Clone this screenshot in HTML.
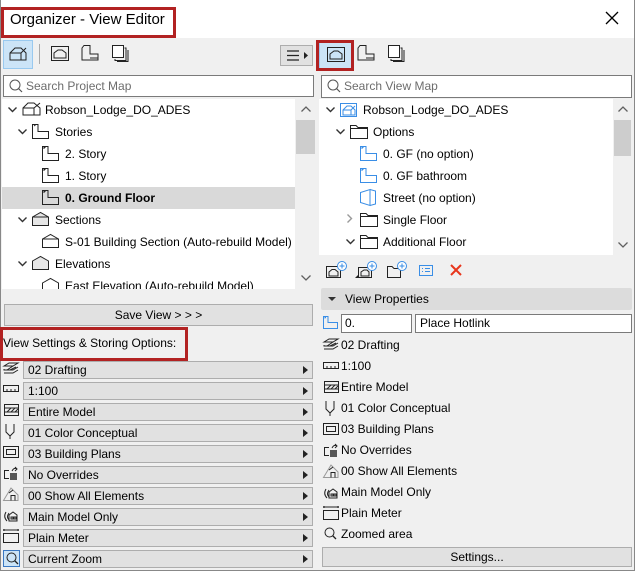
<!DOCTYPE html>
<html><head><style>
*{box-sizing:border-box;margin:0;padding:0}
body{width:635px;height:571px;overflow:hidden;background:#f0f0f0;font-family:"Liberation Sans",sans-serif;font-size:12px;color:#000;position:relative}
.a{position:absolute}
.t{position:absolute;white-space:nowrap;line-height:14px}
.dd{position:absolute;left:23px;width:290px;height:18px;background:#e1e1e1;border:1px solid #adadad;padding-left:4px;line-height:16px}
.dd:after{content:"";position:absolute;right:4px;top:4px;border-left:5px solid #222;border-top:4px solid transparent;border-bottom:4px solid transparent}
svg{position:absolute;overflow:visible}
</style></head><body>
<div class="a" style="left:0;top:0;width:635px;height:38px;background:#fff"></div>
<div class="a" style="left:0;top:0;width:1px;height:571px;background:#888"></div>
<div class="a" style="right:0;top:0;width:1px;height:571px;background:#888"></div>
<div class="a" style="left:0;bottom:0;width:635px;height:1px;background:#888"></div>
<div class="a" style="left:1px;top:7px;width:175px;height:31px;border:3px solid #b22222"></div>
<div class="t" style="left:10px;top:11px;font-size:15px;line-height:18px">Organizer - View Editor</div>
<svg style="left:606px;top:12px" width="12" height="12"><path d="M0 0L12 12M12 0L0 12" stroke="#000" stroke-width="1.3"/></svg>

<!-- left toolbar -->
<div class="a" style="left:3px;top:40px;width:30px;height:29px;background:#cce4f7;border:1px solid #99c9ef"></div>
<svg style="left:9px;top:47px" width="18" height="14"><path d="M1 13V6L6 1H12L17 6V13ZM1 6H12L17 1M12 6V13" fill="none" stroke="#222"/></svg>
<div class="a" style="left:39px;top:44px;width:1px;height:20px;background:#aaa"></div>
<svg style="left:51px;top:46px" width="18" height="16"><rect x="0.5" y="0.5" width="17" height="14" fill="none" stroke="#222"/><path d="M3 12V7L7 4H11L15 7V12Z" fill="none" stroke="#222"/></svg>
<svg style="left:81px;top:45px" width="18" height="17"><path d="M3 0.5H9V9H17V15H1V3Z M9 13H17" fill="none" stroke="#222"/></svg>
<svg style="left:112px;top:45px" width="17" height="17"><rect x="0.5" y="0.5" width="11" height="12" fill="#fff" stroke="#222"/><path d="M3 14V15.5H14V3H12.5M5 16.5H16V5" fill="none" stroke="#222"/></svg>
<div class="a" style="left:280px;top:45px;width:33px;height:21px;background:#e1e1e1;border:1px solid #adadad"></div>
<svg style="left:287px;top:50px" width="22" height="12"><path d="M0 1H12M0 5.5H12M0 10H12" stroke="#222" stroke-width="1.2"/><path d="M17 2L21 5.5L17 9Z" fill="#222"/></svg>

<!-- left search -->
<div class="a" style="left:3px;top:75px;width:311px;height:22px;background:#fff;border:1px solid #7a7a7a"></div>
<svg style="left:9px;top:79px" width="14" height="14"><circle cx="6" cy="6" r="5" fill="none" stroke="#555"/><path d="M9.5 9.5L13 13" stroke="#555" stroke-width="1.2"/></svg>
<div class="t" style="left:26px;top:79px;color:#6d6d6d">Search Project Map</div>

<!-- left tree -->
<div class="a" style="left:2px;top:99px;width:293px;height:190px;background:#fff"></div>
<div class="a" style="left:295px;top:99px;width:20px;height:190px;background:#f0f0f0"></div>
<div class="a" style="left:296px;top:120px;width:19px;height:34px;background:#cdcdcd"></div>
<svg style="left:301px;top:106px" width="10" height="6"><path d="M0.5 5.5L5 1L9.5 5.5" fill="none" stroke="#606060" stroke-width="1.3"/></svg>
<svg style="left:301px;top:275px" width="10" height="6"><path d="M0.5 0.5L5 5L9.5 0.5" fill="none" stroke="#606060" stroke-width="1.3"/></svg>
<div class="a" style="left:2px;top:187px;width:293px;height:22px;background:#d9d9d9"></div>
<svg style="left:8px;top:107px" width="10" height="6"><path d="M0.5 0.5L4.5 4.5L8.5 0.5" fill="none" stroke="#333" stroke-width="1.4"/></svg>
<svg style="left:22px;top:102px" width="20" height="14"><path d="M1 13V6L6 1H12L18 6V13ZM1 6H12L18 1M12 6V13" fill="none" stroke="#222"/></svg>
<div class="t" style="left:45px;top:103px">Robson_Lodge_DO_ADES</div>
<svg style="left:18px;top:129px" width="10" height="6"><path d="M0.5 0.5L4.5 4.5L8.5 0.5" fill="none" stroke="#333" stroke-width="1.4"/></svg>
<svg style="left:32px;top:124px" width="18" height="15"><path d="M0.5 0.5H6V7.5H16.5V14.5H0.5Z M2 2L3.5 1" fill="none" stroke="#222"/></svg>
<div class="t" style="left:55px;top:125px">Stories</div>
<svg style="left:42px;top:146px" width="18" height="15"><path d="M0.5 0.5H6V7.5H16.5V14.5H0.5Z M2 3V1.5H3.5" fill="none" stroke="#222"/></svg>
<div class="t" style="left:65px;top:147px">2. Story</div>
<svg style="left:42px;top:168px" width="18" height="15"><path d="M0.5 0.5H6V7.5H16.5V14.5H0.5Z M2 3V1.5H3.5" fill="none" stroke="#222"/></svg>
<div class="t" style="left:65px;top:169px">1. Story</div>
<svg style="left:42px;top:190px" width="18" height="15"><path d="M0.5 0.5H6V7.5H16.5V14.5H0.5Z M2 3V1.5H3.5" fill="none" stroke="#222"/></svg>
<div class="t" style="left:65px;top:191px;font-weight:bold">0. Ground Floor</div>
<svg style="left:18px;top:217px" width="10" height="6"><path d="M0.5 0.5L4.5 4.5L8.5 0.5" fill="none" stroke="#333" stroke-width="1.4"/></svg>
<svg style="left:32px;top:212px" width="18" height="14"><path d="M0.5 5L8.5 0.5L16.5 5V13.5H0.5Z" fill="#e6e6e6" stroke="#222"/><path d="M0.5 5H16.5" stroke="#222"/></svg>
<div class="t" style="left:55px;top:213px">Sections</div>
<svg style="left:42px;top:234px" width="18" height="14"><path d="M0.5 5L8.5 0.5L16.5 5V13.5H0.5Z M0.5 5H16.5" fill="none" stroke="#222"/></svg>
<div class="t" style="left:65px;top:235px">S-01 Building Section (Auto-rebuild Model)</div>
<svg style="left:18px;top:261px" width="10" height="6"><path d="M0.5 0.5L4.5 4.5L8.5 0.5" fill="none" stroke="#333" stroke-width="1.4"/></svg>
<svg style="left:32px;top:256px" width="18" height="14"><path d="M0.5 5L8.5 0.5L16.5 5V13.5H0.5Z" fill="#e6e6e6" stroke="#222"/></svg>
<div class="t" style="left:55px;top:257px">Elevations</div>
<div class="a" style="left:2px;top:276px;width:293px;height:13px;overflow:hidden">
<svg style="left:40px;top:2px" width="18" height="14"><path d="M0.5 5L8.5 0.5L16.5 5V13.5H0.5Z" fill="none" stroke="#222"/></svg>
<div class="t" style="left:63px;top:3px">East Elevation (Auto-rebuild Model)</div></div>

<div class="a" style="left:4px;top:304px;width:309px;height:22px;background:#e1e1e1;border:1px solid #adadad;text-align:center;line-height:20px">Save View &gt; &gt; &gt;</div>
<div class="a" style="left:0;top:327px;width:188px;height:34px;border:3px solid #b22222"></div>
<div class="t" style="left:3px;top:336px">View Settings &amp; Storing Options:</div>

<!-- left dropdown list -->
<svg style="left:3px;top:362px" width="16" height="14"><path d="M1 4L6 1H15L10 4ZM1 4H10M1 7L1 8H10L15 5M1 11H10L15 8M10 4L4 8M13 5L7 8" fill="none" stroke="#222"/></svg>
<div class="dd" style="top:361px">02 Drafting</div>
<svg style="left:3px;top:385px" width="16" height="8"><rect x="0.5" y="0.5" width="15" height="6" fill="none" stroke="#222"/><path d="M4 4V7M8 4V7M12 4V7" stroke="#222"/></svg>
<div class="dd" style="top:382px">1:100</div>
<svg style="left:4px;top:404px" width="15" height="12"><rect x="0.5" y="0.5" width="14" height="11" fill="none" stroke="#222"/><path d="M1 4H14M1 8H14M3 8L7 4M7 8L11 4M11 8L14 5" stroke="#222"/></svg>
<div class="dd" style="top:403px">Entire Model</div>
<svg style="left:5px;top:424px" width="10" height="15"><path d="M1 0V8L5 12L9 8V0M5 12V15" fill="none" stroke="#222"/></svg>
<div class="dd" style="top:424px">01 Color Conceptual</div>
<svg style="left:3px;top:446px" width="16" height="12"><rect x="0.5" y="0.5" width="15" height="11" fill="none" stroke="#222"/><rect x="3.5" y="3.5" width="9" height="5" fill="none" stroke="#222"/></svg>
<div class="dd" style="top:445px">03 Building Plans</div>
<svg style="left:3px;top:466px" width="16" height="15"><path d="M6 4.5H1.5V12.5H6" fill="none" stroke="#222"/><rect x="7" y="7" width="7" height="7" fill="#555"/><path d="M9 5Q11 1 14 3M12 1L14 3L12 5" fill="none" stroke="#222"/></svg>
<div class="dd" style="top:466px">No Overrides</div>
<svg style="left:3px;top:487px" width="16" height="14"><path d="M0.5 13.5L8 1L15 8V13.5Z" fill="none" stroke="#999"/><path d="M8 13.5V8.5H12V13.5M6 6L10 3" fill="none" stroke="#222"/></svg>
<div class="dd" style="top:487px">00 Show All Elements</div>
<svg style="left:3px;top:508px" width="16" height="14"><path d="M4 13Q0 9 3 4M6 12Q3 9 6 5M6 7L10 4L14 7V13H6Z" fill="none" stroke="#222"/><rect x="8" y="9" width="2" height="2" stroke="#222" fill="none"/><rect x="11" y="9" width="2" height="2" stroke="#222" fill="none"/></svg>
<div class="dd" style="top:508px">Main Model Only</div>
<svg style="left:3px;top:529px" width="16" height="14"><path d="M0 1H16M1 0V2M15 0V2" stroke="#222"/><rect x="0.5" y="4.5" width="15" height="9" fill="none" stroke="#222"/></svg>
<div class="dd" style="top:529px">Plain Meter</div>
<div class="a" style="left:3px;top:550px;width:17px;height:17px;background:#cce4f7;border:1px solid #3a78c2"></div>
<svg style="left:6px;top:552px" width="13" height="13"><circle cx="5.5" cy="5.5" r="4.5" fill="none" stroke="#222"/><path d="M8.5 8.5L12 12" stroke="#222" stroke-width="1.3"/></svg>
<div class="dd" style="top:550px">Current Zoom</div>

<!-- right toolbar -->
<div class="a" style="left:316px;top:40px;width:38px;height:31px;border:3px solid #b22222;background:#cce4f7"></div>
<div class="a" style="left:319px;top:43px;width:1px;height:25px;background:#99c9ef"></div>
<svg style="left:327px;top:47px" width="18" height="16"><rect x="0.5" y="0.5" width="17" height="14" fill="none" stroke="#222"/><path d="M3 12V7L7 4H11L15 7V12Z" fill="none" stroke="#222"/></svg>
<svg style="left:357px;top:45px" width="18" height="17"><path d="M3 0.5H9V9H17V15H1V3Z M9 13H17" fill="none" stroke="#222"/></svg>
<svg style="left:388px;top:45px" width="17" height="17"><rect x="0.5" y="0.5" width="11" height="12" fill="#fff" stroke="#222"/><path d="M3 14V15.5H14V3H12.5M5 16.5H16V5" fill="none" stroke="#222"/></svg>

<div class="a" style="left:321px;top:75px;width:311px;height:23px;background:#fff;border:1px solid #7a7a7a"></div>
<svg style="left:327px;top:79px" width="14" height="14"><circle cx="6" cy="6" r="5" fill="none" stroke="#555"/><path d="M9.5 9.5L13 13" stroke="#555" stroke-width="1.2"/></svg>
<div class="t" style="left:344px;top:79px;color:#6d6d6d">Search View Map</div>

<div class="a" style="left:319px;top:99px;width:294px;height:156px;background:#fff"></div>
<div class="a" style="left:613px;top:99px;width:18px;height:156px;background:#f0f0f0"></div>
<div class="a" style="left:614px;top:120px;width:17px;height:36px;background:#cdcdcd"></div>
<svg style="left:618px;top:106px" width="10" height="6"><path d="M0.5 5.5L5 1L9.5 5.5" fill="none" stroke="#606060" stroke-width="1.3"/></svg>
<svg style="left:618px;top:242px" width="10" height="6"><path d="M0.5 0.5L5 5L9.5 0.5" fill="none" stroke="#606060" stroke-width="1.3"/></svg>
<svg style="left:326px;top:107px" width="10" height="6"><path d="M0.5 0.5L4.5 4.5L8.5 0.5" fill="none" stroke="#333" stroke-width="1.4"/></svg>
<svg style="left:340px;top:103px" width="18" height="14"><rect x="0.5" y="0.5" width="16" height="13" fill="none" stroke="#3a8ee6"/><path d="M3 12V7L7 3H11L15 7V12ZM3 7H11L15 3M11 7V12" fill="none" stroke="#3a8ee6"/></svg>
<div class="t" style="left:363px;top:103px">Robson_Lodge_DO_ADES</div>
<svg style="left:336px;top:129px" width="10" height="6"><path d="M0.5 0.5L4.5 4.5L8.5 0.5" fill="none" stroke="#333" stroke-width="1.4"/></svg>
<svg style="left:350px;top:125px" width="18" height="14"><path d="M0.5 0.5H6L8 2.5H17.5V13.5H0.5Z M0.5 3.5H17.5" fill="none" stroke="#222"/></svg>
<div class="t" style="left:373px;top:125px">Options</div>
<svg style="left:360px;top:146px" width="18" height="15"><path d="M0.5 0.5H6V7.5H16.5V14.5H0.5Z M2 3V1.5H3.5" fill="none" stroke="#3a8ee6"/></svg>
<div class="t" style="left:383px;top:147px">0. GF (no option)</div>
<svg style="left:360px;top:168px" width="18" height="15"><path d="M0.5 0.5H6V7.5H16.5V14.5H0.5Z M2 3V1.5H3.5" fill="none" stroke="#3a8ee6"/></svg>
<div class="t" style="left:383px;top:169px">0. GF bathroom</div>
<svg style="left:360px;top:189px" width="16" height="17"><path d="M0.5 3.5L10 0.5V16.5L0.5 13.5Z M10 0.5L15.5 2V15L10 16.5" fill="none" stroke="#3a8ee6"/></svg>
<div class="t" style="left:383px;top:191px">Street (no option)</div>
<svg style="left:347px;top:214px" width="6" height="10"><path d="M0.5 0.5L4.5 4.5L0.5 8.5" fill="none" stroke="#999" stroke-width="1.4"/></svg>
<svg style="left:360px;top:213px" width="18" height="14"><path d="M0.5 0.5H6L8 2.5H17.5V13.5H0.5Z M0.5 3.5H17.5" fill="none" stroke="#222"/></svg>
<div class="t" style="left:383px;top:213px">Single Floor</div>
<svg style="left:346px;top:239px" width="10" height="6"><path d="M0.5 0.5L4.5 4.5L8.5 0.5" fill="none" stroke="#333" stroke-width="1.4"/></svg>
<svg style="left:360px;top:235px" width="18" height="14"><path d="M0.5 0.5H6L8 2.5H17.5V13.5H0.5Z M0.5 3.5H17.5" fill="none" stroke="#222"/></svg>
<div class="t" style="left:383px;top:235px">Additional Floor</div>

<!-- action icons -->
<svg style="left:326px;top:261px" width="22" height="18"><rect x="0.5" y="5.5" width="14" height="11" fill="none" stroke="#222"/><path d="M3 15V11L6 8.5H9L12 11V15Z" fill="none" stroke="#222"/><circle cx="16" cy="5" r="4.5" fill="#fff" stroke="#3a8ee6"/><path d="M16 2.5V7.5M13.5 5H18.5" stroke="#3a8ee6"/></svg>
<svg style="left:355px;top:261px" width="22" height="19"><rect x="3.5" y="6.5" width="13" height="10" fill="none" stroke="#222"/><path d="M0 17L3 14L5 17Z" fill="#222"/><path d="M6 15V11L9 9H12L14 11V15Z" fill="none" stroke="#222"/><circle cx="17" cy="5" r="4.5" fill="#fff" stroke="#3a8ee6"/><path d="M17 2.5V7.5M14.5 5H19.5" stroke="#3a8ee6"/></svg>
<svg style="left:387px;top:261px" width="22" height="18"><path d="M0.5 5.5H5L7 7.5H13.5V16.5H0.5Z" fill="none" stroke="#222"/><circle cx="15" cy="5" r="4.5" fill="#fff" stroke="#3a8ee6"/><path d="M15 2.5V7.5M12.5 5H17.5" stroke="#3a8ee6"/></svg>
<svg style="left:419px;top:265px" width="14" height="11"><rect x="0.5" y="0.5" width="13" height="10" fill="none" stroke="#3a8ee6"/><path d="M3 3.5H4M6 3.5H11M3 6.5H4M6 6.5H11" stroke="#3a8ee6"/></svg>
<svg style="left:450px;top:264px" width="12" height="12"><path d="M1 1L11 11M11 1L1 11" stroke="#e8361c" stroke-width="2"/></svg>

<!-- view properties -->
<div class="a" style="left:321px;top:288px;width:311px;height:22px;background:#dcdcdc;border-radius:2px"></div>
<svg style="left:328px;top:297px" width="8" height="5"><path d="M0 0H8L4 4Z" fill="#333"/></svg>
<div class="t" style="left:345px;top:292px">View Properties</div>
<svg style="left:323px;top:316px" width="15" height="13"><path d="M0.5 0.5H5V6.5H14.5V12.5H0.5Z M2 2.5V1.5H3" fill="none" stroke="#3a8ee6"/></svg>
<div class="a" style="left:341px;top:314px;width:71px;height:19px;background:#fff;border:1px solid #7a7a7a;padding-left:3px;line-height:17px">0.</div>
<div class="a" style="left:415px;top:314px;width:217px;height:19px;background:#fff;border:1px solid #7a7a7a;padding-left:4px;line-height:17px">Place Hotlink</div>

<svg style="left:323px;top:338px" width="16" height="14"><path d="M1 4L6 1H15L10 4ZM1 4H10M1 7L1 8H10L15 5M1 11H10L15 8M10 4L4 8M13 5L7 8" fill="none" stroke="#222"/></svg>
<div class="t" style="left:341px;top:338px">02 Drafting</div>
<svg style="left:323px;top:362px" width="16" height="8"><rect x="0.5" y="0.5" width="15" height="6" fill="none" stroke="#222"/><path d="M4 4V7M8 4V7M12 4V7" stroke="#222"/></svg>
<div class="t" style="left:341px;top:359px">1:100</div>
<svg style="left:324px;top:381px" width="15" height="12"><rect x="0.5" y="0.5" width="14" height="11" fill="none" stroke="#222"/><path d="M1 4H14M1 8H14M3 8L7 4M7 8L11 4M11 8L14 5" stroke="#222"/></svg>
<div class="t" style="left:341px;top:380px">Entire Model</div>
<svg style="left:325px;top:401px" width="10" height="15"><path d="M1 0V8L5 12L9 8V0M5 12V15" fill="none" stroke="#222"/></svg>
<div class="t" style="left:341px;top:401px">01 Color Conceptual</div>
<svg style="left:323px;top:423px" width="16" height="12"><rect x="0.5" y="0.5" width="15" height="11" fill="none" stroke="#222"/><rect x="3.5" y="3.5" width="9" height="5" fill="none" stroke="#222"/></svg>
<div class="t" style="left:341px;top:422px">03 Building Plans</div>
<svg style="left:323px;top:443px" width="16" height="15"><path d="M6 4.5H1.5V12.5H6" fill="none" stroke="#222"/><rect x="7" y="7" width="7" height="7" fill="#555"/><path d="M9 5Q11 1 14 3M12 1L14 3L12 5" fill="none" stroke="#222"/></svg>
<div class="t" style="left:341px;top:443px">No Overrides</div>
<svg style="left:323px;top:464px" width="16" height="14"><path d="M0.5 13.5L8 1L15 8V13.5Z" fill="none" stroke="#999"/><path d="M8 13.5V8.5H12V13.5M6 6L10 3" fill="none" stroke="#222"/></svg>
<div class="t" style="left:341px;top:464px">00 Show All Elements</div>
<svg style="left:323px;top:485px" width="16" height="14"><path d="M4 13Q0 9 3 4M6 12Q3 9 6 5M6 7L10 4L14 7V13H6Z" fill="none" stroke="#222"/><rect x="8" y="9" width="2" height="2" stroke="#222" fill="none"/><rect x="11" y="9" width="2" height="2" stroke="#222" fill="none"/></svg>
<div class="t" style="left:341px;top:485px">Main Model Only</div>
<svg style="left:323px;top:506px" width="16" height="14"><path d="M0 1H16M1 0V2M15 0V2" stroke="#222"/><rect x="0.5" y="4.5" width="15" height="9" fill="none" stroke="#222"/></svg>
<div class="t" style="left:341px;top:506px">Plain Meter</div>
<svg style="left:324px;top:527px" width="13" height="13"><circle cx="5.5" cy="5.5" r="4.5" fill="none" stroke="#222"/><path d="M8.5 8.5L12 12" stroke="#222" stroke-width="1.3"/></svg>
<div class="t" style="left:341px;top:527px">Zoomed area</div>
<div class="a" style="left:322px;top:547px;width:310px;height:20px;background:#e1e1e1;border:1px solid #adadad;text-align:center;line-height:18px">Settings...</div>
</body></html>
